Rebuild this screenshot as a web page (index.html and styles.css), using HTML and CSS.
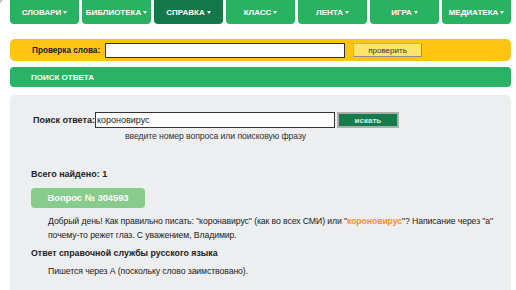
FILE: index.html
```html
<!DOCTYPE html>
<html lang="ru">
<head>
<meta charset="utf-8">
<link rel="stylesheet" href="styles.css">
</head>
<body>
<div class="page">
  <span class="stray"></span>
  <nav class="menu">
    <a class="tab">СЛОВАРИ<i class="caret"></i></a>
    <a class="tab">БИБЛИОТЕКА<i class="caret"></i></a>
    <a class="tab active">СПРАВКА<i class="caret"></i></a>
    <a class="tab">КЛАСС<i class="caret"></i></a>
    <a class="tab">ЛЕНТА<i class="caret"></i></a>
    <a class="tab">ИГРА<i class="caret"></i></a>
    <a class="tab">МЕДИАТЕКА<i class="caret"></i></a>
  </nav>

  <form class="check">
    <label class="check-label">Проверка слова:</label>
    <input class="check-input" type="text">
    <button class="check-btn" type="button">проверить</button>
  </form>

  <div class="section-title">ПОИСК ОТВЕТА</div>

  <div class="panel">
    <div class="search-row">
      <label class="search-label">Поиск ответа:</label>
      <input class="search-input" type="text" value="короновирус">
      <button class="search-btn" type="button">искать</button>
    </div>
    <div class="hint">введите номер вопроса или поисковую фразу</div>

    <div class="total">Всего найдено: 1</div>
    <div class="qbtn">Вопрос № 304593</div>
    <p class="question">Добрый день! Как правильно писать: "коронавирус" (как во всех СМИ) или "<b class="hl">короновирус</b>"? Написание через "а" почему-то режет глаз. С уважением, Владимир.</p>
    <div class="answer-title">Ответ справочной службы русского языка</div>
    <p class="answer">Пишется через А (поскольку слово заимствовано).</p>
  </div>
</div>
</body>
</html>
```

FILE: styles.css
```css
html, body {
  margin: 0;
  padding: 0;
  background: #ffffff;
}
body {
  font-family: "Liberation Sans", Arial, sans-serif;
  font-size: 9px;
  color: #222;
  overflow: hidden;
}
.page {
  position: relative;
  width: 516px;
}
.stray {
  position: absolute;
  left: -2px;
  top: 4px;
  width: 3px;
  height: 3px;
  border-right: 1px solid #9a9a9a;
  border-bottom: 1px solid #9a9a9a;
  transform: rotate(45deg);
}
.menu {
  display: flex;
  gap: 3px;
  padding-left: 10px;
  margin-top: -6px;
}
.tab {
  width: 69px;
  height: 30px;
  box-sizing: border-box;
  padding-top: 6px;
  background: #29b262;
  border-radius: 4px;
  color: #fff;
  font-weight: bold;
  font-size: 8px;
  display: flex;
  align-items: center;
  justify-content: center;
}
.tab.active {
  background: #14784a;
}
.caret {
  display: inline-block;
  width: 0;
  height: 0;
  border-left: 2.5px solid transparent;
  border-right: 2.5px solid transparent;
  border-top: 3px solid #fff;
  margin-left: 2px;
  margin-top: 1px;
}
.check {
  margin: 15px 5px 0 10px;
  height: 22px;
  background: #fdc511;
  border-radius: 5px;
  display: flex;
  align-items: center;
  padding-left: 22px;
}
.check-label {
  flex: 0 0 73px;
  font-weight: bold;
  font-size: 8.2px;
  color: #1a1a1a;
  white-space: nowrap;
}
.check-input {
  width: 240px;
  height: 15px;
  box-sizing: border-box;
  border: 1px solid #333;
  background: #fff;
  margin: 0;
  padding: 0;
}
.check-btn {
  margin-left: 8px;
  width: 69px;
  height: 14px;
  box-sizing: border-box;
  background: #fde46b;
  border: 1px solid #c9b45a;
  border-right-color: #8f8f8f;
  border-bottom-color: #8f8f8f;
  font-family: "Liberation Sans", Arial, sans-serif;
  font-size: 8px;
  color: #333;
  padding: 0;
}
.section-title {
  margin: 6px 5px 0 10px;
  height: 20px;
  background: #2ab366;
  border-radius: 4px;
  color: #fff;
  font-weight: bold;
  font-size: 8px;
  display: flex;
  align-items: center;
  padding-left: 21px;
}
.panel {
  margin: 8px 5px 0 10px;
  background: #eceef0;
  border-radius: 5px;
  padding: 17px 0 20px 21px;
  min-height: 200px;
}
.search-row {
  display: flex;
  align-items: center;
  padding-left: 2px;
}
.search-label {
  flex: 0 0 61px;
  font-weight: bold;
  font-size: 9px;
  white-space: nowrap;
}
.search-input {
  width: 240px;
  height: 16px;
  box-sizing: border-box;
  border: 1px solid #333;
  background: #fff;
  margin: 0;
  padding: 0 1px;
  font-family: "Liberation Sans", Arial, sans-serif;
  font-size: 9px;
  color: #222;
}
.search-btn {
  margin-left: 2px;
  width: 62px;
  height: 16px;
  box-sizing: border-box;
  background: #157b4a;
  border: 2px solid #a9b0ab;
  color: #d9f2e2;
  font-family: "Liberation Sans", Arial, sans-serif;
  font-size: 8px;
  font-weight: bold;
  padding: 0;
}
.hint {
  margin-top: 3px;
  line-height: 11px;
  padding-left: 94px;
  font-size: 8.7px;
  letter-spacing: -0.1px;
  color: #333;
}
.total {
  margin-top: 27px;
  line-height: 11px;
  font-weight: bold;
  font-size: 9px;
}
.qbtn {
  margin-top: 8px;
  width: 114px;
  height: 20px;
  background: #87cc8d;
  border-radius: 4px;
  color: #fff;
  font-weight: bold;
  font-size: 9.3px;
  display: flex;
  align-items: center;
  justify-content: center;
}
.question {
  margin: 6px 0 0 17px;
  font-size: 8.7px;
  letter-spacing: -0.1px;
  line-height: 14px;
  padding-right: 8px;
}
.hl {
  color: #f7941d;
}
.answer-title {
  margin-top: 6px;
  line-height: 11px;
  font-weight: bold;
  font-size: 8.8px;
}
.answer {
  margin: 7px 0 0 17px;
  line-height: 11px;
  font-size: 8.7px;
  letter-spacing: -0.1px;
}
```
